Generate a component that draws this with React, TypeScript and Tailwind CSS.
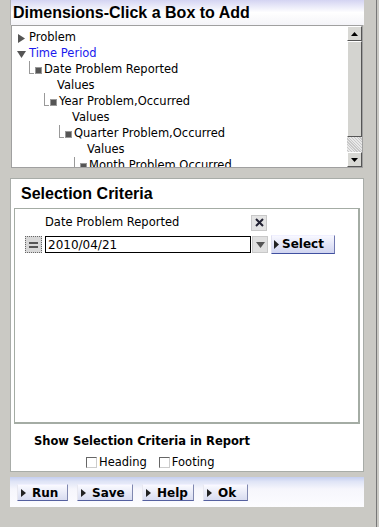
import React from 'react';

const font = { fontFamily: '"DejaVu Sans", Verdana, sans-serif' };
const titleFont = { fontFamily: '"Liberation Sans", Arial, sans-serif' };

function Square() {
  return <span className="inline-block w-[7px] h-[7px] bg-[#555] border border-[#999] mr-[2px]" />;
}

function Connector() {
  return (
    <span className="inline-block w-[5px] h-[13px] border-l border-b border-[#999] mr-[1px] -mt-[6px]" />
  );
}

function TreeRow({ indent, children }: { indent: number; children: React.ReactNode }) {
  return (
    <div className="h-[16px] flex items-center whitespace-nowrap" style={{ paddingLeft: indent }}>
      {children}
    </div>
  );
}

function Triangle({ down }: { down?: boolean }) {
  return (
    <svg width="9" height="9" viewBox="0 0 9 9" className="mr-[3px]">
      {down ? (
        <polygon points="0,1 9,1 4.5,8" fill="#555" />
      ) : (
        <polygon points="1,0 8,4.5 1,9" fill="#555" />
      )}
    </svg>
  );
}

function FooterButton({ label, w }: { label: string; w: string }) {
  return (
    <button
      className={`${w} h-[17px] flex items-center pl-[3px] text-[12px] font-bold text-black border border-t-[#f0f0ff] border-l-[#e8e8f0] border-r-[#8088b0] border-b-[#5560a0] bg-gradient-to-b from-[#fafaff] to-[#d8dcf0]`}
    >
      <svg width="5" height="8" viewBox="0 0 5 8" className="mr-[6px]">
        <polygon points="0,0 5,4 0,8" fill="#222" />
      </svg>
      {label}
    </button>
  );
}

export default function App() {
  return (
    <div className="w-[379px] h-[527px] bg-[#cac9c4] text-[11.5px] text-black relative overflow-hidden" style={font}>
      <div className="absolute right-[2px] top-0 bottom-0 w-px bg-[#777]" />
      <div className="pl-[10px] pr-[15px]">
        {/* dimensions panel */}
        <div className="h-[25px] bg-gradient-to-b from-[#d4d4f2] via-[#ffffff] to-[#f4f4f8] flex items-center pl-[2px] pt-[1px] border-l border-[#b0b0b0]">
          <span className="text-[16px] font-bold" style={titleFont}>Dimensions-Click a Box to Add</span>
        </div>
        <div className="h-[143px] flex bg-white border border-[#a0a0a0] ml-[1px] mr-[1px]">
          <div className="flex-1 pt-[4px] overflow-hidden">
            <TreeRow indent={5}>
              <Triangle />
              <span>Problem</span>
            </TreeRow>
            <TreeRow indent={5}>
              <Triangle down />
              <span className="text-[#1a1aee]">Time Period</span>
            </TreeRow>
            <TreeRow indent={17}>
              <Connector />
              <Square />
              <span>Date Problem Reported</span>
            </TreeRow>
            <TreeRow indent={45}>Values</TreeRow>
            <TreeRow indent={32}>
              <Connector />
              <Square />
              <span>Year Problem,Occurred</span>
            </TreeRow>
            <TreeRow indent={60}>Values</TreeRow>
            <TreeRow indent={47}>
              <Connector />
              <Square />
              <span>Quarter Problem,Occurred</span>
            </TreeRow>
            <TreeRow indent={75}>Values</TreeRow>
            <TreeRow indent={62}>
              <Connector />
              <Square />
              <span>Month Problem,Occurred</span>
            </TreeRow>
          </div>
          <div className="w-[15px] flex flex-col bg-[#d4d4d0]">
            <div className="h-[15px] flex items-center justify-center bg-[#d8d8d4] border border-t-white border-l-white border-r-[#555] border-b-[#555]">
              <svg width="7" height="4" viewBox="0 0 7 4"><polygon points="0,4 7,4 3.5,0" fill="#000" /></svg>
            </div>
            <div className="h-[96px] bg-[#d4d4d0] border border-t-white border-l-white border-r-[#555] border-b-[#555]" />
            <div className="flex-1 bg-[repeating-linear-gradient(45deg,#e8e8e8_0px,#e8e8e8_1px,#c8c8c8_1px,#c8c8c8_2px)]" />
            <div className="h-[15px] flex items-center justify-center bg-[#d8d8d4] border border-t-white border-l-white border-r-[#555] border-b-[#555]">
              <svg width="7" height="4" viewBox="0 0 7 4"><polygon points="0,0 7,0 3.5,4" fill="#000" /></svg>
            </div>
          </div>
        </div>

        {/* selection criteria panel */}
        <div className="mt-[10px] h-[294px] bg-white border border-[#a8aca8] flex flex-col">
          <div className="h-[29px] flex items-center pl-[10px] pt-[2px]">
            <span className="text-[16px] font-bold" style={titleFont}>Selection Criteria</span>
          </div>
          <div className="mx-[3px] h-[217px] border-2 border-[#a4aca4] border-t border-l">
            <div className="flex items-center h-[24px] pt-[4px]">
              <span className="ml-[30px] w-[206px]">Date Problem Reported</span>
              <div className="w-[16px] h-[16px] flex items-center justify-center bg-[#e4e4e4] border border-[#c8c8c8]">
                <svg width="9" height="9" viewBox="0 0 9 9">
                  <path d="M1 1 L8 8 M8 1 L1 8" stroke="#223" strokeWidth="2" />
                </svg>
              </div>
            </div>
            <div className="flex items-center mt-[3px] h-[18px]">
              <div className="ml-[10px] w-[17px] h-[17px] flex flex-col items-center justify-center gap-[2px] bg-[#d8d8d8] border border-dotted border-[#666]">
                <span className="block w-[9px] h-[2px] bg-[#555]" />
                <span className="block w-[9px] h-[2px] bg-[#555]" />
              </div>
              <div className="ml-[3px] w-[206px] h-[17px] border border-black flex items-center pl-[2px] text-[12px]">2010/04/21</div>
              <div className="ml-px w-[16px] h-[17px] flex items-center justify-center bg-[#e0e0e0] border border-[#c8c8c8]">
                <svg width="9" height="6" viewBox="0 0 9 6"><polygon points="0,0 9,0 4.5,6" fill="#555" /></svg>
              </div>
              <button className="ml-[3px] w-[64px] h-[19px] -mt-[1px] flex items-center pl-[2px] text-[12px] font-bold border border-t-[#f0f0ff] border-l-[#e0e0f0] border-r-[#7078b0] border-b-[#4050a0] bg-gradient-to-b from-[#f8f8ff] to-[#d0d4f0]">
                <svg width="5" height="9" viewBox="0 0 5 9" className="mr-[3px]"><polygon points="0,0 5,4.5 0,9" fill="#222" /></svg>
                Select
              </button>
            </div>
          </div>
          <div className="pl-[23px] pt-[9px] font-bold">Show Selection Criteria in Report</div>
          <div className="flex items-center pl-[75px] mt-[4px]">
            <span className="w-[11px] h-[11px] border border-[#666] border-r-[#ccc] border-b-[#ccc] mr-[2px]" />
            <span>Heading</span>
            <span className="ml-[12px] w-[11px] h-[11px] border border-[#666] border-r-[#ccc] border-b-[#ccc] mr-[2px]" />
            <span>Footing</span>
          </div>
        </div>

        {/* footer */}
        <div className="mt-[5px] h-[30px] bg-[linear-gradient(to_bottom,#c4cef0_0%,#dfe4f6_15%,#f6f6fc_40%,#fcfcff_100%)] flex items-center pl-[7px] gap-[9px] pt-[1px]">
          <FooterButton label="Run" w="w-[51px]" />
          <FooterButton label="Save" w="w-[56px]" />
          <FooterButton label="Help" w="w-[52px]" />
          <FooterButton label="Ok" w="w-[45px]" />
        </div>
      </div>
    </div>
  );
}
